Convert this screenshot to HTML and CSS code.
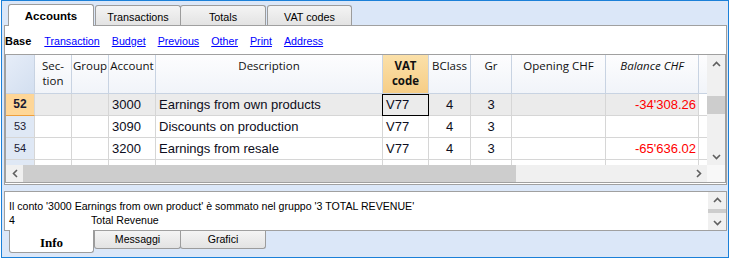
FILE: index.html
```html
<!DOCTYPE html>
<html>
<head>
<meta charset="utf-8">
<link rel="stylesheet" href="styles.css">
</head>
<body>
<div class="window">
  <div class="tabs-top">
    <div class="tab tab-active t-acc">Accounts</div>
    <div class="tab t-tr">Transactions</div>
    <div class="tab t-to">Totals</div>
    <div class="tab t-vat">VAT codes</div>
  </div>
  <div class="panel">
    <div class="nav">
      <span class="nav-base">Base</span>
      <a class="nav-link">Transaction</a>
      <a class="nav-link">Budget</a>
      <a class="nav-link">Previous</a>
      <a class="nav-link">Other</a>
      <a class="nav-link">Print</a>
      <a class="nav-link">Address</a>
    </div>
    <div class="grid">
      <div class="grid-main">
        <div class="cols">
          <div class="row head">
            <div class="c w-num h-corner"></div>
            <div class="c w-sec">Sec-<br>tion</div>
            <div class="c w-grp">Group</div>
            <div class="c w-acc">Account</div>
            <div class="c w-desc">Description</div>
            <div class="c w-vat h-vat">VAT<br>code</div>
            <div class="c w-bc">BClass</div>
            <div class="c w-gr">Gr</div>
            <div class="c w-op">Opening CHF</div>
            <div class="c w-bal h-it">Balance CHF</div>
            <div class="c w-fill"></div>
          </div>
          <div class="row body sel">
            <div class="c w-num num num-sel">52</div>
            <div class="c w-sec"></div>
            <div class="c w-grp"></div>
            <div class="c w-acc">3000</div>
            <div class="c w-desc">Earnings from own products</div>
            <div class="c w-vat focus">V77</div>
            <div class="c w-bc ctr">4</div>
            <div class="c w-gr ctr">3</div>
            <div class="c w-op"></div>
            <div class="c w-bal neg">-34'308.26</div>
            <div class="c w-fill"></div>
          </div>
          <div class="row body">
            <div class="c w-num num">53</div>
            <div class="c w-sec"></div>
            <div class="c w-grp"></div>
            <div class="c w-acc">3090</div>
            <div class="c w-desc">Discounts on production</div>
            <div class="c w-vat">V77</div>
            <div class="c w-bc ctr">4</div>
            <div class="c w-gr ctr">3</div>
            <div class="c w-op"></div>
            <div class="c w-bal neg"></div>
            <div class="c w-fill"></div>
          </div>
          <div class="row body">
            <div class="c w-num num">54</div>
            <div class="c w-sec"></div>
            <div class="c w-grp"></div>
            <div class="c w-acc">3200</div>
            <div class="c w-desc">Earnings from resale</div>
            <div class="c w-vat">V77</div>
            <div class="c w-bc ctr">4</div>
            <div class="c w-gr ctr">3</div>
            <div class="c w-op"></div>
            <div class="c w-bal neg">-65'636.02</div>
            <div class="c w-fill"></div>
          </div>
          <div class="row body">
            <div class="c w-num num">55</div>
            <div class="c w-sec"></div>
            <div class="c w-grp"></div>
            <div class="c w-acc">3290</div>
            <div class="c w-desc">Discounts on resale</div>
            <div class="c w-vat">V77</div>
            <div class="c w-bc ctr">4</div>
            <div class="c w-gr ctr">3</div>
            <div class="c w-op"></div>
            <div class="c w-bal neg"></div>
            <div class="c w-fill"></div>
          </div>
        </div>
        <div class="vscroll">
          <div class="sb-btn"><svg width="9" height="6" viewBox="0 0 9 6"><polyline points="1,5 4.5,1.5 8,5" fill="none" stroke="#5f5f5f" stroke-width="1.6"/></svg></div>
          <div class="vtrack">
            <div class="vthumb"></div>
          </div>
          <div class="sb-btn"><svg width="9" height="6" viewBox="0 0 9 6"><polyline points="1,1 4.5,4.5 8,1" fill="none" stroke="#5f5f5f" stroke-width="1.6"/></svg></div>
        </div>
      </div>
      <div class="hbar">
        <div class="hscroll">
          <div class="sb-hbtn"><svg width="6" height="9" viewBox="0 0 6 9"><polyline points="5,1 1.5,4.5 5,8" fill="none" stroke="#5f5f5f" stroke-width="1.6"/></svg></div>
          <div class="htrack"><div class="hthumb"></div></div>
          <div class="sb-hbtn"><svg width="6" height="9" viewBox="0 0 6 9"><polyline points="1,1 4.5,4.5 1,8" fill="none" stroke="#5f5f5f" stroke-width="1.6"/></svg></div>
        </div>
        <div class="sc-corner"></div>
      </div>
    </div>
  </div>
  <div class="info">
    <div class="info-text">
      <div class="info-line">Il conto '3000 Earnings from own product' è sommato nel gruppo '3 TOTAL REVENUE'</div>
      <div class="info-line"><span class="info-num">4</span>Total Revenue</div>
    </div>
    <div class="info-scroll">
      <div class="isb-btn"><svg width="9" height="6" viewBox="0 0 9 6"><polyline points="1,5 4.5,1.5 8,5" fill="none" stroke="#5f5f5f" stroke-width="1.6"/></svg></div>
      <div class="ithumb-wrap"><div class="ithumb"></div></div>
      <div class="isb-btn"><svg width="9" height="6" viewBox="0 0 9 6"><polyline points="1,1 4.5,4.5 8,1" fill="none" stroke="#5f5f5f" stroke-width="1.6"/></svg></div>
    </div>
  </div>
  <div class="tabs-bottom">
    <div class="btab btab-active b-info">Info</div>
    <div class="btab b-msg">Messaggi</div>
    <div class="btab b-gra">Grafici</div>
  </div>
</div>
</body>
</html>
```
FILE: styles.css
```css
* { box-sizing: border-box; }
html, body { margin: 0; padding: 0; }
body {
  width: 730px;
  height: 259px;
  overflow: hidden;
  background: #ffffff;
  font-family: "Liberation Sans", Arial, sans-serif;
  font-size: 11px;
  color: #000;
}
.window {
  margin-left: 1px;
  width: 728px;
  height: 258px;
  border: 1px solid #1b80d8;
  background: #dbe7f8;
  display: flex;
  flex-direction: column;
}

/* top tabs */
.tabs-top {
  display: flex;
  align-items: flex-end;
  height: 24px;
  padding-left: 6px;
}
.tab {
  height: 20px;
  border: 1px solid #9c9c9c;
  border-bottom: none;
  border-radius: 3px 3px 0 0;
  background: linear-gradient(#f4f4f4, #e3e3e3);
  text-align: center;
  padding-top: 5px;
  line-height: 13px;
  font-size: 10.8px;
  color: #000;
}
.tab-active {
  height: 22px;
  margin-bottom: -1px;
  background: #fff;
  font-weight: bold;
  font-size: 11.5px;
  position: relative;
  z-index: 1;
  padding-top: 5px;
}
.t-acc { width: 86px; }
.t-tr { width: 86px; margin-left: 1px; }
.t-to { width: 86px; margin-left: -1px; }
.t-vat { width: 85px; margin-left: 1px; }

/* main panel */
.panel {
  margin-left: 2px;
  width: 723px;
  height: 160px;
  border: 1px solid #a0a0a0;
  background: #fff;
}
.nav {
  height: 28px;
  display: flex;
  align-items: center;
  gap: 12px;
  padding-top: 2px;
}
.nav-base { font-weight: bold; margin-right: 1px; }
.nav-link { color: #0000ff; text-decoration: underline; font-size: 10.7px; }

.grid {
  width: 721px;
  height: 129px;
  border: 1px solid #a0a0a0;
}
.grid-main { display: flex; height: 110px; }
.cols { width: 701px; height: 110px; overflow: hidden; }
.row { display: flex; }
.c {
  flex: none;
  border-right: 1px solid #d6d6d6;
  border-bottom: 1px solid #d6d6d6;
  white-space: nowrap;
  overflow: hidden;
}
.w-num { width: 29px; }
.w-sec { width: 37px; }
.w-grp { width: 37px; }
.w-acc { width: 47px; }
.w-desc { width: 227px; }
.w-vat { width: 46px; }
.w-bc { width: 42px; }
.w-gr { width: 41px; }
.w-op { width: 94px; }
.w-bal { width: 93px; }
.w-fill { width: 8px; border-right: none; }

.head .c {
  height: 39px;
  background: linear-gradient(#fdfdfe, #f1f4f9);
  border-right-color: #c8d3e2;
  border-bottom-color: #c8d3e2;
  font-family: "Open Sans", "Liberation Sans", sans-serif;
  font-size: 11.5px;
  line-height: 15px;
  padding-top: 3px;
  text-align: center;
  color: #111;
}
.head .h-corner { background: linear-gradient(135deg, #e6edf8, #d3dff0); }
.head .h-vat { background: linear-gradient(#fbe0a9, #f6cd86); font-weight: bold; }
.head .h-it { font-style: italic; }

.body .c {
  height: 22px;
  font-size: 13px;
  line-height: 21px;
  padding: 0 3px;
  color: #0d0d20;
}
.body.sel .c { background: #ebebeb; }
.body.sel .w-fill { background: #fff; }
.body .num {
  background: #dfe8f5;
  font-size: 11px;
  text-align: center;
  color: #1a1a33;
  padding: 0;
}
.body.sel .num-sel {
  background: #fed697;
  font-weight: bold;
  font-size: 12px;
  border-bottom-color: #ee9f3c;
}
.body .ctr { text-align: center; }
.body .neg { color: #ff0000; text-align: right; padding-right: 2px; }
.focus { position: relative; overflow: visible; }
.focus::after {
  content: "";
  position: absolute;
  left: -1px;
  top: 0;
  right: -1px;
  bottom: -1px;
  border: 1px solid #000;
}

/* scrollbars */
.vscroll {
  width: 18px;
  height: 110px;
  background: #f0f0f0;
  display: flex;
  flex-direction: column;
}
.sb-btn {
  height: 17px;
  display: flex;
  align-items: center;
  justify-content: center;
}
.vtrack { flex: 1; padding-top: 24px; }
.vthumb { height: 18px; background: #cdcdcd; }

.hbar { display: flex; height: 17px; }
.hscroll {
  width: 701px;
  background: #f0f0f0;
  display: flex;
}
.sb-hbtn {
  width: 17px;
  display: flex;
  align-items: center;
  justify-content: center;
}
.htrack { flex: 1; }
.hthumb { width: 493px; height: 17px; background: #cdcdcd; }
.sc-corner { width: 18px; background: #f8f8f8; }

/* info panel */
.info {
  margin-top: 6px;
  margin-left: 2px;
  width: 723px;
  height: 40px;
  border: 1px solid #a0a0a0;
  background: #fff;
  display: flex;
}
.info-text { flex: 1; padding: 7px 0 0 4px; font-size: 10.6px; }
.info-line { line-height: 14px; white-space: nowrap; }
.info-num { display: inline-block; width: 82px; }
.info-scroll {
  width: 18px;
  background: #f0f0f0;
  display: flex;
  flex-direction: column;
}
.isb-btn {
  height: 15px;
  display: flex;
  align-items: center;
  justify-content: center;
}
.ithumb-wrap { flex: 1; padding-top: 2px; }
.ithumb { height: 4px; background: #cdcdcd; }

/* bottom tabs */
.tabs-bottom {
  display: flex;
  align-items: flex-start;
  margin-top: -1px;
  padding-left: 7px;
}
.btab {
  height: 18px;
  margin-top: 1px;
  border: 1px solid #9c9c9c;
  border-top: none;
  border-radius: 0 0 3px 3px;
  background: linear-gradient(#f4f4f4, #e3e3e3);
  text-align: center;
  line-height: 16px;
  font-size: 10.6px;
}
.btab-active {
  height: 23px;
  margin-top: 0;
  background: #fff;
  font-family: "Liberation Serif", "Times New Roman", serif;
  font-weight: bold;
  font-size: 13px;
  line-height: 23px;
  padding-top: 1px;
  position: relative;
  z-index: 1;
}
.b-info { width: 85px; }
.b-msg { width: 87px; margin-left: 0; }
.b-gra { width: 86px; margin-left: -1px; }
```
